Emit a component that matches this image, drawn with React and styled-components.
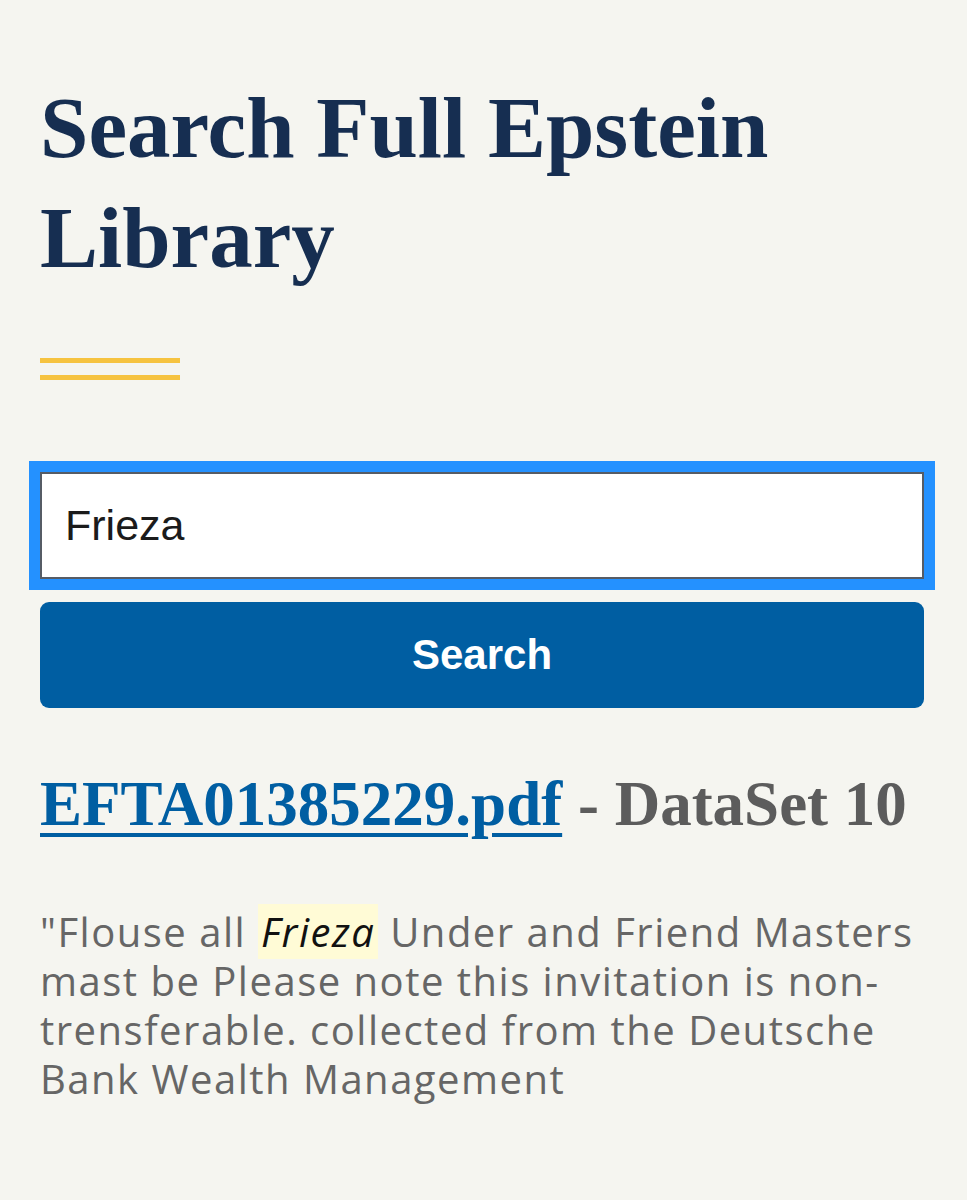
import React from 'react';
import styled, { createGlobalStyle } from 'styled-components';

const GlobalStyle = createGlobalStyle`
  html, body {
    margin: 0;
    padding: 0;
    background: #f5f5f0;
  }

  body {
    font-family: "Open Sans", "Liberation Sans", sans-serif;
  }
`;

const Page = styled.main`
  min-height: 1200px;
  padding: 73px 43px 0 40px;
  box-sizing: border-box;
`;

const Title = styled.h1`
  margin: 0;
  font-family: "Liberation Serif", serif;
  font-weight: 700;
  font-size: 87px;
  line-height: 110px;
  color: #162e51;
`;

const Rule = styled.div`
  display: flex;
  flex-direction: column;
  gap: 12px;
  width: 140px;
  margin-top: 65px;

  span {
    display: block;
    height: 5px;
    background: #f6c340;
  }
`;

const SearchForm = styled.form`
  display: flex;
  flex-direction: column;
  gap: 23px;
  margin-top: 92px;
`;

const SearchInput = styled.input`
  box-sizing: border-box;
  width: 100%;
  height: 107px;
  padding: 0 23px;
  border: 2px solid #565c65;
  border-radius: 0;
  background: #fff;
  outline: 11px solid #2491ff;
  outline-offset: 0;
  font-family: "Liberation Sans", sans-serif;
  font-size: 43px;
  color: #1b1b1b;
`;

const SearchButton = styled.button`
  height: 106px;
  border: 0;
  border-radius: 9px;
  background: #005ea2;
  color: #fff;
  font-family: "Liberation Sans", sans-serif;
  font-weight: 700;
  font-size: 42px;
  cursor: pointer;
`;

const Result = styled.article`
  margin-top: 58px;
`;

const ResultTitle = styled.h2`
  margin: 0;
  font-family: "Liberation Serif", serif;
  font-weight: 700;
  font-size: 63px;
  line-height: 76px;
  color: #5c5c5c;

  a {
    color: #005ea2;
    text-decoration: underline;
    text-decoration-thickness: 4px;
    text-underline-offset: 8px;
  }
`;

const Snippet = styled.p`
  margin: 65px 0 0;
  font-size: 40px;
  line-height: 49px;
  letter-spacing: 1.5px;
  color: #666;

  mark {
    background: #fffbd6;
    color: #111;
    font-style: italic;
    padding: 0 3px;
  }
`;

export default function App() {
  return (
    <>
      <GlobalStyle />
      <Page>
        <Title>Search Full Epstein Library</Title>
        <Rule>
          <span />
          <span />
        </Rule>
        <SearchForm onSubmit={(e) => e.preventDefault()}>
          <SearchInput type="text" defaultValue="Frieza" aria-label="Search" />
          <SearchButton type="submit">Search</SearchButton>
        </SearchForm>
        <Result>
          <ResultTitle>
            <a href="#EFTA01385229">EFTA01385229.pdf</a> - DataSet 10
          </ResultTitle>
          <Snippet>
            "Flouse all <mark>Frieza</mark> Under and Friend Masters mast be Please note this
            invitation is non-trensferable. collected from the Deutsche Bank Wealth Management
          </Snippet>
        </Result>
      </Page>
    </>
  );
}
